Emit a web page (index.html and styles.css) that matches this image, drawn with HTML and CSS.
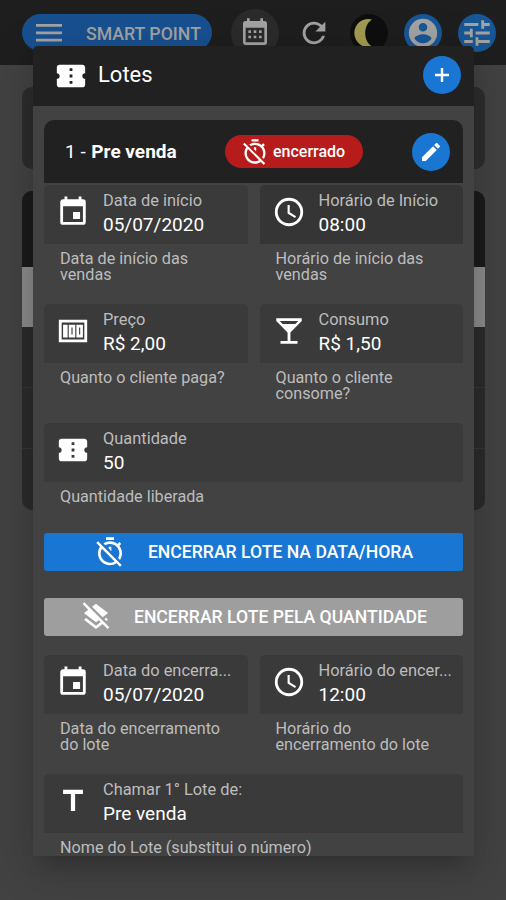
FILE: index.html
```
<!DOCTYPE html>
<html lang="pt-BR">
<head>
<meta charset="utf-8">
<title>Lotes</title>
<link rel="stylesheet" href="styles.css">
</head>

<body>
<svg class="defs">
	<symbol id="timer-off" viewBox="0 0 24 24"><path d="M19.04 4.55l-1.42 1.42C16.07 4.74 14.12 4 12 4c-1.83 0-3.53.55-4.95 1.48l1.46 1.46C9.53 6.35 10.73 6 12 6c3.87 0 7 3.13 7 7 0 1.27-.35 2.47-.94 3.49l1.45 1.45C20.45 16.53 21 14.83 21 13c0-2.12-.74-4.07-1.97-5.61l1.42-1.42-1.41-1.42zM15 1H9v2h6V1zM11 9.44l2 2V8h-2v1.44zM3.02 4L1.75 5.27 4.5 8.03C3.55 9.45 3 11.16 3 13c0 4.97 4.02 9 9 9 1.84 0 3.55-.55 4.98-1.5l2.5 2.5 1.27-1.27-7.71-7.71L3.02 4zM12 20c-3.87 0-7-3.13-7-7 0-1.28.35-2.48.95-3.52l9.56 9.56c-1.03.61-2.23.96-3.51.96z"/></symbol>
	<symbol id="ticket" viewBox="0 0 24 24"><path d="M13,8.5H11V6.5H13V8.5M13,13H11V11H13V13M13,17.5H11V15.5H13V17.5M22,10V6C22,4.89 21.1,4 20,4H4A2,2 0 0,0 2,6V10C3.11,10 4,10.9 4,12A2,2 0 0,1 2,14V18A2,2 0 0,0 4,20H20A2,2 0 0,0 22,18V14A2,2 0 0,1 20,12A2,2 0 0,1 22,10Z"/></symbol>
	<symbol id="event" viewBox="0 0 24 24"><path d="M19,3H18V1H16V3H8V1H6V3H5C3.89,3 3,3.9 3,5V19A2,2 0 0,0 5,21H19A2,2 0 0,0 21,19V5A2,2 0 0,0 19,3M19,19H5V8H19V19M12,12H17V17H12V12Z"/></symbol>
	<symbol id="clock" viewBox="0 0 24 24"><path d="M12 20A8 8 0 0 0 20 12A8 8 0 0 0 12 4A8 8 0 0 0 4 12A8 8 0 0 0 12 20M12 2A10 10 0 1 1 12 22A10 10 0 0 1 12 2M12.5 7V12.25L17 14.92L16.25 16.15L11 13V7H12.5Z"/></symbol>
</svg>

<div class="page">
	<header class="topbar">
		<div class="menu-btn">
			<svg class="icon-menu" viewBox="0 0 26 18"><path d="M0 0h26v2.8H0zM0 7.4h26v2.8H0zM0 14.8h26v2.8H0z"/></svg>
			<span>SMART POINT</span>
		</div>
		<div class="round calendar">
			<svg class="icon" viewBox="0 0 24 24"><path d="M9,10V12H7V10H9M13,10V12H11V10H13M17,10V12H15V10H17M19,3A2,2 0 0,1 21,5V19A2,2 0 0,1 19,21H5C3.89,21 3,20.1 3,19V5A2,2 0 0,1 5,3H6V1H8V3H16V1H18V3H19M19,19V8H5V19H19M9,14V16H7V14H9M13,14V16H11V14H13M17,14V16H15V14H17Z"/></svg>
		</div>
		<div class="round refresh">
			<svg class="icon" viewBox="0 0 24 24"><path d="M17.65,6.35C16.2,4.9 14.21,4 12,4A8,8 0 0,0 4,12A8,8 0 0,0 12,20C15.73,20 18.84,17.45 19.73,14H17.65C16.83,16.33 14.61,18 12,18A6,6 0 0,1 6,12A6,6 0 0,1 12,6C13.66,6 15.14,6.69 16.22,7.78L13,11H20V4L17.65,6.35Z"/></svg>
		</div>
		<div class="round night">
			<svg class="icon-moon" viewBox="0 0 38 38"><path d="M22 5.5A14 14 0 1 0 22 32.5C13 27 13 11 22 5.5Z"/></svg>
		</div>
		<div class="round blue">
			<svg class="icon" viewBox="0 0 24 24"><path d="M12,19.2C9.5,19.2 7.29,17.92 6,16C6.03,14 10,12.9 12,12.9C14,12.9 17.97,14 18,16C16.71,17.92 14.5,19.2 12,19.2M12,5A3,3 0 0,1 15,8A3,3 0 0,1 12,11A3,3 0 0,1 9,8A3,3 0 0,1 12,5M12,2A10,10 0 0,0 2,12A10,10 0 0,0 12,22A10,10 0 0,0 22,12C22,6.47 17.5,2 12,2Z"/></svg>
		</div>
		<div class="round blue">
			<svg class="icon" viewBox="0 0 24 24"><path d="M3,17V19H9V17H3M3,5V7H13V5H3M13,21V19H21V17H13V15H11V21H13M7,9V11H3V13H7V15H9V9H7M21,13V11H11V13H21M15,9H17V7H21V5H17V3H15V9Z"/></svg>
		</div>
	</header>
	<div class="panel"></div>
	<div class="list">
		<div class="list-head"></div>
		<div class="list-active"></div>
		<div class="list-row"></div>
		<div class="list-row"></div>
		<div class="list-row"></div>
	</div>
</div>

<div class="dialog">
	<div class="dialog-head">
		<svg class="icon" viewBox="0 0 24 24"><use href="#ticket"/></svg>
		<h1>Lotes</h1>
		<button class="fab"><svg viewBox="0 0 24 24"><path d="M19,13.2H13.2V19H10.8V13.2H5V10.8H10.8V5H13.2V10.8H19Z"/></svg></button>
	</div>

	<div class="card">
		<div class="card-head">
			<p class="lote">1 - <b>Pre venda</b></p>
			<div class="chip"><svg viewBox="0 0 24 24"><use href="#timer-off"/></svg>encerrado</div>
			<button class="fab"><svg viewBox="0 0 24 24"><path d="M20.71,7.04C21.1,6.65 21.1,6 20.71,5.63L18.37,3.29C18,2.9 17.35,2.9 16.96,3.29L15.12,5.12L18.87,8.87M3,17.25V21H6.75L17.81,9.93L14.06,6.18L3,17.25Z"/></svg></button>
		</div>

		<div class="fields">
			<div class="field">
				<div class="box">
					<svg class="icon" viewBox="0 0 24 24"><use href="#event"/></svg>
					<div class="text"><label>Data de início</label><span>05/07/2020</span></div>
				</div>
				<p class="hint">Data de início das vendas</p>
			</div>
			<div class="field">
				<div class="box hover">
					<svg class="icon" viewBox="0 0 24 24"><use href="#clock"/></svg>
					<div class="text"><label>Horário de Início</label><span>08:00</span></div>
				</div>
				<p class="hint">Horário de início das vendas</p>
			</div>
			<div class="field">
				<div class="box">
					<svg class="icon" viewBox="0 0 24 24"><path fill-rule="evenodd" d="M2 4H22V20H2ZM4 6V18H20V6Z"/><path fill-rule="evenodd" d="M5 7.5H8.2V16.5H5ZM9 7.5H13.6V16.5H9ZM10.9 9.5V14.5H11.7V9.5ZM14.4 7.5H19V16.5H14.4ZM16.3 9.5V14.5H17.1V9.5Z"/></svg>
					<div class="text"><label>Preço</label><span>R$ 2,00</span></div>
				</div>
				<p class="hint">Quanto o cliente paga?</p>
			</div>
			<div class="field">
				<div class="box">
					<svg class="icon" viewBox="0 0 24 24"><path d="M7.5,7L5.5,5H18.5L16.5,7M11,13V19H6V21H18V19H13V13L21,5V3H3V5L11,13Z"/></svg>
					<div class="text"><label>Consumo</label><span>R$ 1,50</span></div>
				</div>
				<p class="hint">Quanto o cliente consome?</p>
			</div>
			<div class="field wide">
				<div class="box">
					<svg class="icon" viewBox="0 0 24 24"><use href="#ticket"/></svg>
					<div class="text"><label>Quantidade</label><span>50</span></div>
				</div>
				<p class="hint">Quantidade liberada</p>
			</div>
		</div>

		<button class="btn btn-date"><svg viewBox="0 0 24 24"><use href="#timer-off"/></svg><span>ENCERRAR LOTE NA DATA/HORA</span></button>
		<button class="btn btn-qty"><svg viewBox="0 0 24 24"><path d="M3.27,1L2,2.27L6.22,6.5L3,9L4.63,10.27L12,16L14.1,14.37L15.53,15.8L12,18.54L4.63,12.81L3,14.07L12,21.07L16.95,17.22L20.73,21L22,19.73L3.27,1M19.36,10.27L21,9L12,2L9.09,4.27L16.96,12.15L19.36,10.27M19.81,15L21,14.07L19.57,12.64L18.38,13.56L19.81,15Z"/></svg><span>ENCERRAR LOTE PELA QUANTIDADE</span></button>

		<div class="fields">
			<div class="field">
				<div class="box">
					<svg class="icon" viewBox="0 0 24 24"><use href="#event"/></svg>
					<div class="text"><label>Data do encerra...</label><span>05/07/2020</span></div>
				</div>
				<p class="hint">Data do encerramento do lote</p>
			</div>
			<div class="field">
				<div class="box">
					<svg class="icon" viewBox="0 0 24 24"><use href="#clock"/></svg>
					<div class="text"><label>Horário do encer...</label><span>12:00</span></div>
				</div>
				<p class="hint">Horário do encerramento do lote</p>
			</div>
			<div class="field wide">
				<div class="box">
					<svg class="icon" viewBox="0 0 24 24"><path d="M5,4V7H10.5V19H13.5V7H19V4H5Z"/></svg>
					<div class="text"><label>Chamar 1° Lote de:</label><span>Pre venda</span></div>
				</div>
				<p class="hint">Nome do Lote (substitui o número)</p>
			</div>
		</div>
	</div>
</div>
</body>
</html>
```
FILE: styles.css
```
*{margin:0; padding:0; box-sizing:border-box;}
body{width:506px; height:900px; position:relative; overflow:hidden; background:#424242; color:#fff; font-family:Roboto, "Liberation Sans", sans-serif;}
svg{display:block; fill:currentColor; flex:none;}
button{border:0; color:#fff; font-family:inherit;}
.defs{position:absolute; width:0; height:0;}
.icon{width:34px; height:34px;}

/* page behind the dialog */
.topbar{height:65px; padding:9px 10px 0 22px; background:#1e1e1e; color:#a3a3a3; display:flex; align-items:flex-start;}
.menu-btn{width:191px; height:37px; margin:5px 19px 0 0; padding-left:14px; border-radius:19px; background:#185090; display:flex; align-items:center;}
.menu-btn span{margin:2px 0 0 24px; font-size:17.7px; font-weight:500; white-space:nowrap;}
.icon-menu{width:26px; height:18px;}
.round{width:38px; height:38px; margin:5px 0 0 16px; border-radius:50%; display:flex; align-items:center; justify-content:center; flex:none;}
.calendar{width:48px; height:48px; margin:0; background:#2b2b2b;}
.calendar .icon{width:32px; height:32px;}
.refresh{margin-left:16px;}
.night{margin-left:17px; background:#0e0e0e; color:#a39b50;}
.icon-moon{width:38px; height:38px;}
.blue{background:#185796;}
.panel{height:82px; margin:22px 21px 22px 22px; border-radius:10px; background:#2d2d2d;}
.list{margin:0 21px 0 22px; border-radius:10px; background:#2b2b2b; overflow:hidden;}
.list-head{height:76px; background:#1b1b1b;}
.list-active{height:60px; background:#8a8a8a;}
.list-row{height:61px; border-bottom:1px solid #363636;}
.list-row:last-child{border:0;}

/* dialog */
.dialog{position:absolute; top:46px; left:33px; width:441px; height:810px; border-radius:5px 5px 0 0; background:#424242; overflow:hidden; box-shadow:0 15px 20px -9px rgba(0,0,0,.2), 0 10px 45px 4px rgba(0,0,0,.16);}
.dialog-head{height:60px; padding:0 13px 0 21px; background:#212121; display:flex; align-items:center;}
.dialog-head h1{margin:-3px auto 0 10px; font-size:22px; font-weight:400;}
.fab{width:38px; height:38px; margin-top:-2px; border-radius:50%; background:#1976d2; display:flex; align-items:center; justify-content:center;}
.fab svg{width:24px; height:24px;}

.card{margin:14px 11px 0; border-radius:10px 10px 0 0; overflow:hidden;}
.card-head{height:63px; padding:0 13px 0 21px; background:#212121; display:flex; align-items:center;}
.lote{width:160px; font-size:19px;}
.lote b{margin-left:1px; font-weight:700;}
.chip{width:138px; height:33px; padding-left:16px; margin-right:auto; border-radius:17px; background:#b71c1c; font-size:16px; font-weight:500; display:flex; align-items:center;}
.chip svg{width:28px; height:28px; margin-right:4px;}
.card-head .fab{margin-top:0;}

.fields{padding-top:2px; display:grid; grid-template-columns:1fr 1fr; column-gap:12px;}
.field{height:119px; min-width:0;}
.wide{grid-column:span 2;}
.box{height:59px; padding:0 12px; border-radius:5px 5px 0 0; background:#3a3a3a; display:flex;}
.box.hover{background:#353535;}
.box .icon{margin-top:10px;}
.text{min-width:0; margin-left:13px; padding-top:5px; flex:1;}
.text label{display:block; color:#bdbdbd; font-size:16.4px; line-height:21px; white-space:nowrap;}
.text span{display:block; font-size:19px; line-height:27px;}
.hint{padding:7px 12px 0 16px; color:#bdbdbd; font-size:16.2px; line-height:16px;}

.btn{width:100%; height:38px; border-radius:3px; font-size:17.6px; font-weight:500; display:flex; align-items:center; justify-content:center;}
.btn svg{width:32px; height:32px; margin-right:22px;}
.btn-date{margin-top:-9px; background:#1976d2;}
.btn-qty{margin:27px 0 17px; background:#9e9e9e;}
```
